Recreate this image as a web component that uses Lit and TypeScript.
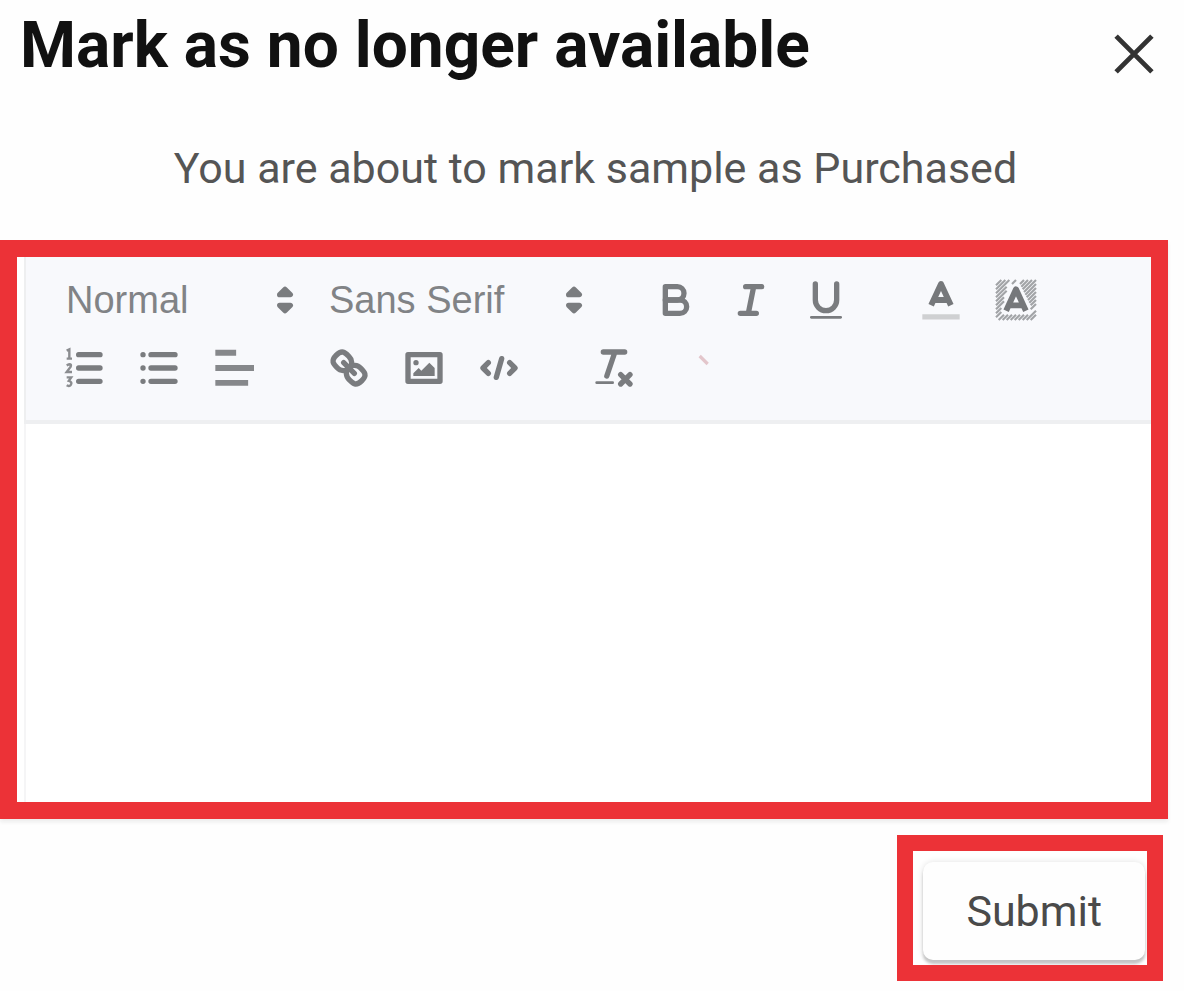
import { LitElement, css, html, svg } from "lit";
import { customElement, property } from "lit/decorators.js";

const icons: Record<string, unknown> = {
  picker: svg`<polygon class="s f" points="7 11 9 13 11 11"/><polygon class="s f" points="7 7 9 5 11 7"/>`,
  bold: svg`<path class="s" d="M5,4H9.5A2.5,2.5,0,0,1,9.5,9H5Z"/><path class="s" d="M5,9h5.5A2.5,2.5,0,0,1,10.5,14H5Z"/>`,
  italic: svg`<path class="s" d="M7,4H13M5,14H11M8,14L10,4"/>`,
  underline: svg`<path class="s" d="M5,3V9a4,4,0,0,0,8,0V3"/><rect class="f" x="3" y="15" width="12" height="1" rx=".5"/>`,
  color: svg`<path class="pale" d="M2,15.300H16"/><path class="a" d="M5.300,11L9,3L12.700,11M11.600,9H6.400"/>`,
  background: svg`<path class="hatch" d="M1.5,3.5l2-2M1.5,5l3.500-3.500M1.5,6.5l5-5M1.5,8l4-4M1.5,9.5l4-4M1.5,11l3-3M1.5,12.5l3-3M1.5,14l2-2M1.5,15.5l2-2M2.500,16.500l2-2M4,16.5l2-2M5.500,16.500l2-2M7,16.5l2-2M8.500,16.500l2-2M10,16.5l2-2M11.500,16.500l2-2M13,16.5l3.500-3.500M14.500,16.500l2-2M7.500,3l1.500-1.500M10.500,3l1.500-1.500M11,4l2.500-2.500M11.500,5l3.500-3.500M12,6l4.500-4.500M12.500,7l4-4M13,8l3.500-3.500M13.500,9l3-3M14,10l2.500-2.500M14.500,11l2-2M14.500,12.500l2-2"/><path class="a" d="M5.300,13L9,5L12.700,13M11.600,11H6.400"/>`,
  ordered: svg`<path class="s" d="M7,4H15M7,9H15M7,14H15"/><path class="thin" d="M2.500,2.500L3.500,2V5.500M2.500,5.500H4.500M2.500,8Q4.500,7 4,8.500L2.500,10.500H4.500M2.500,12.500H4.200L3.300,13.800Q4.800,14.200 4,15.400Q3.300,16 2.500,15.500"/>`,
  bullet: svg`<path class="s" d="M6,4H15M6,9H15M6,14H15M3,4H3.010M3,9H3.010M3,14H3.010"/>`,
  align: svg`<path class="bar" d="M2,3.300H9.800M2,9H16.500M2,14.600H14.300"/>`,
  link: svg`<path class="s" d="M7,7L11,11"/><path class="s" d="M8.900,4.577a3.476,3.476,0,0,1,.36,4.679A3.476,3.476,0,0,1,4.577,8.900C3.185,7.500,2.035,6.400,4.217,4.217S7.500,3.185,8.900,4.577Z"/><path class="s" d="M13.423,9.100a3.476,3.476,0,0,0-4.679-.36,3.476,3.476,0,0,0,.36,4.679c1.392,1.392,2.500,2.542,4.679.36S14.815,10.500,13.423,9.100Z"/>`,
  image: svg`<rect class="s" x="3" y="4" width="12" height="10"/><circle class="f" cx="6" cy="7" r="1"/><polygon class="f" points="5 12 5 11 7 9 8 10 11 7 13 9 13 12"/>`,
  code: svg`<path class="s" d="M5,7L3,9L5,11M13,7L15,9L13,11M10,5.500L8,12.500"/>`,
  clean: svg`<path class="s" d="M5,3H13M6.300,12L9.350,3M11.500,11.500L15,15M15,11.500L11.500,15"/><rect class="f" x="2" y="14" width="7" height="1" rx=".5"/>`,
  mark: svg`<path class="rose" d="M13,4.500L16,7.500"/>`,
  close: svg`<path class="cross" d="M2,2L16,16M16,2L2,16"/>`,
};

@customElement("line-icon")
class LineIcon extends LitElement {
  @property() name = "bold";

  static styles = css`
    :host { display: block; width: 48px; height: 48px; }
    svg { display: block; width: 100%; height: 100%; }
    .s { fill: none; stroke: #7a7c7f; stroke-width: 2; stroke-linecap: round; stroke-linejoin: round; }
    .f { fill: #7a7c7f; }
    .a { fill: none; stroke: #76787b; stroke-width: 2.2; stroke-linejoin: round; }
    .bar { fill: none; stroke: #86888b; stroke-width: 2.2; }
    .thin { fill: none; stroke: #8b8d90; stroke-width: 0.9; }
    .pale { fill: none; stroke: #cfd0d2; stroke-width: 2; }
    .hatch { fill: none; stroke: #a2a4a7; stroke-width: 0.8; }
    .rose { fill: none; stroke: #e3c6cb; stroke-width: 1.2; }
    .cross { fill: none; stroke: #333; stroke-width: 1.9; }
  `;

  render() {
    return html`<svg viewBox="0 0 18 18" aria-hidden="true">${icons[this.name]}</svg>`;
  }
}

const row = (items: [string, string][]) => html`
  <div class="group">
    ${items.map(
      ([name, label]) => html`<button class="tool" type="button" aria-label=${label}><line-icon name=${name}></line-icon></button>`
    )}
  </div>
`;

@customElement("app-root")
class AppRoot extends LitElement {
  static styles = css`
    :host { display: block; font-family: Roboto, sans-serif; color: #4a4a4a; background: #fefefe; }
    * { box-sizing: border-box; }
    button, select, textarea { font: inherit; color: inherit; border: 0; margin: 0; padding: 0; background: none; }
    .dialog { display: flex; flex-direction: column; min-height: 100vh; padding: 8px 16px 10px 0; }
    .header { display: flex; justify-content: space-between; align-items: center; padding-left: 20px; }
    .title { margin: 0; font-size: 64px; line-height: 76px; font-weight: 700; color: #111; }
    .close { display: flex; justify-content: center; width: 68px; padding-top: 16px; }
    .close line-icon { width: 46px; height: 46px; }
    .message { margin: 0; padding: 54px 0 42px 23px; font-size: 43px; line-height: 60px; text-align: center; color: #555; }
    .editor { display: flex; flex-direction: column; flex: 1; border: 17px solid #ec3237; background: #fff; padding-left: 7px; box-shadow: 0 3px 4px #ececec; }
    .toolbar { display: flex; flex-wrap: wrap; gap: 4px 40px; padding: 11px 20px 20px; border-left: 2px solid #eeeff0; border-bottom: 4px solid #eeeff1; background: #f8f9fc; }
    .group { display: flex; }
    .tool { display: flex; align-items: center; justify-content: center; width: 75px; height: 64px; }
    .picker { display: grid; align-items: center; height: 64px; color: #818386; }
    .picker > * { grid-area: 1 / 1; }
    .picker line-icon { justify-self: end; pointer-events: none; }
    .select { appearance: none; width: 100%; height: 64px; padding-left: 20px; font-family: "Liberation Sans", sans-serif; font-size: 38px; }
    .format { width: 263px; }
    .family { width: 289px; }
    .content { flex: 1; width: 100%; min-height: 200px; padding: 24px 40px; resize: none; outline: 0; border-left: 2px solid #f5f5f6; font-size: 38px; }
    .footer { display: flex; justify-content: flex-end; padding: 16px 5px 0 0; }
    .frame { border: 16px solid #ec3237; padding: 11px 2px 5px 10px; background: #fff; overflow: hidden; }
    .submit { display: block; padding: 19px 43px; font-size: 43px; line-height: 60px; border-radius: 10px; background: #fefefe; box-shadow: 0 4px 3px #c4c4c4, 0 0 6px #e2e2e2; }
  `;

  render() {
    return html`
      <main class="dialog">
        <header class="header">
          <h1 class="title">Mark as no longer available</h1>
          <button class="close" type="button" aria-label="Close"><line-icon name="close"></line-icon></button>
        </header>
        <p class="message">You are about to mark sample as Purchased</p>
        <section class="editor">
          <div class="toolbar">
            <div class="group">
              <div class="picker format">
                <select class="select" aria-label="Text format"><option>Normal</option></select>
                <line-icon name="picker"></line-icon>
              </div>
              <div class="picker family">
                <select class="select" aria-label="Font"><option>Sans Serif</option></select>
                <line-icon name="picker"></line-icon>
              </div>
            </div>
            ${row([["bold", "Bold"], ["italic", "Italic"], ["underline", "Underline"]])}
            ${row([["color", "Text colour"], ["background", "Background colour"]])}
            ${row([["ordered", "Numbered list"], ["bullet", "Bulleted list"], ["align", "Align"]])}
            ${row([["link", "Link"], ["image", "Image"], ["code", "Code"]])}
            ${row([["clean", "Clear formatting"], ["mark", "More"]])}
          </div>
          <textarea class="content" aria-label="Message"></textarea>
        </section>
        <footer class="footer">
          <div class="frame"><button class="submit" type="button">Submit</button></div>
        </footer>
      </main>
    `;
  }
}
